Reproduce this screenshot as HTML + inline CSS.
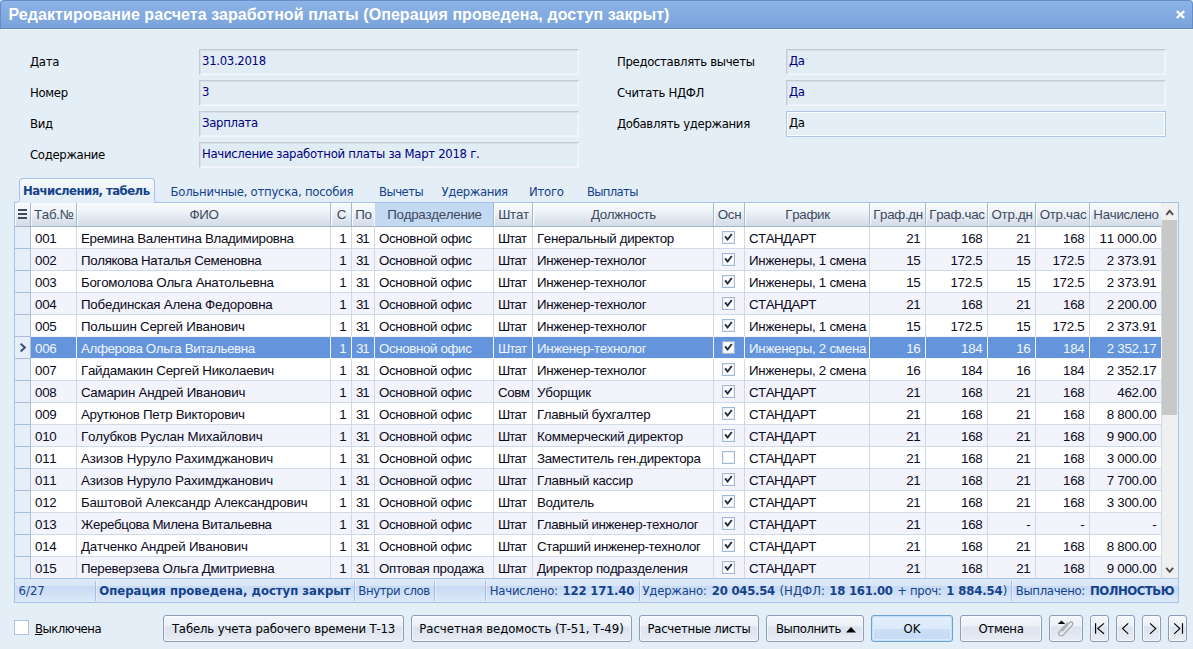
<!DOCTYPE html><html lang="ru"><head><meta charset="utf-8"><title>Редактирование расчета заработной платы</title><style>
html,body{margin:0;padding:0}
body{width:1193px;height:649px;overflow:hidden;background:#e4eef7;position:relative;font-family:"DejaVu Sans Condensed","DejaVu Sans","Liberation Sans",sans-serif;font-size:13px;color:#000;letter-spacing:-0.25px;font-kerning:none;font-variant-ligatures:none}
div,span{box-sizing:border-box}
.abs{position:absolute;white-space:pre}
#title{position:absolute;left:0;top:0;width:1193px;height:29px;background:linear-gradient(#8db3e6,#79a3db);border:1px solid #648ec9;border-bottom-color:#5f8ac6;border-radius:4px 4px 0 0;box-shadow:0 1px 0 #edf3fa}
#title .t{position:absolute;left:7.5px;top:5px;font:bold 16px "Liberation Sans",sans-serif;color:#fff;letter-spacing:0.07px;white-space:pre}
.lbl{position:absolute;height:26px;line-height:25px;white-space:pre;letter-spacing:-0.33px}
.fld{position:absolute;height:26px;width:380px;line-height:22px;padding-left:2px;letter-spacing:-0.31px;white-space:pre;color:#000080;border:1px solid;border-color:#c3cad4 #f1f6fb #f1f6fb #c3cad4;box-shadow:inset 1px 1px 0 #d7dee8,inset -1px -1px 0 #edf3f9;background:#e2ecf5}
.fld.act{border-color:#b2c5e2;box-shadow:inset 0 0 0 1px #fbfdff;color:#000;background:#e4eef7}
.tab{position:absolute;top:182px;height:21px;line-height:20px;color:#15428b;white-space:pre;letter-spacing:-0.4px}
#grid{position:absolute;left:14px;top:202px;width:1165px;height:401px;border:1px solid #a6c2e8;background:#fff}
.hc{position:absolute;top:203px;height:24px;border-right:1px solid #a4b7d0;border-bottom:1px solid #9fb3cc;background:linear-gradient(#f9fbfd,#eef3f7 38%,#dee5ee 72%,#d4dce8);font:13.33px "Liberation Sans",sans-serif;color:#3d4a60;text-align:center;line-height:23px;padding-left:1px;white-space:pre;letter-spacing:-0.3px;overflow:hidden;font-kerning:none;box-shadow:inset 1px 1px 0 #fbfcfe}
.hc.sort{background:#c3d8f1;box-shadow:none}
.hc.presort{border-right-color:#f4f8fd}
.row{position:absolute;left:15px;width:1147px;height:22px;border-bottom:1px solid #cfd9e8;background:#fff}
.row.alt{background:#f3f3fc}
.row.sel{background:#6495dc}
.c{position:absolute;top:0;height:21px;line-height:22px;border-right:1px solid #cfd9e8;font:13.33px "Liberation Sans",sans-serif;line-height:23px;color:#0a0a20;white-space:pre;letter-spacing:-0.26px;overflow:hidden;font-kerning:none}
.row.sel .c{color:#f0f5fd;border-right-color:#f2f6fc}
.row.sel{border-bottom-color:#f2f6fc}
.row.presel{border-bottom-color:#f2f6fc}
.c.ind{background:#e6eef8;height:22px;border-right:1px solid #a9bfdc !important;border-bottom:1px solid #a9bfdc}
.cb{position:absolute;left:8px;top:4px;width:13px;height:13px;border:1px solid #a3b8d2;background:#fff;box-shadow:inset 0 0 0 1px #eef2f8}
#sb{position:absolute;left:15px;top:578px;width:1163px;height:24px;background:linear-gradient(#dfeaf9,#d8e6f8 29%,#c6daf3 31%,#cfe0f5 60%,#dce9f9);color:#15428b;border-top:1px solid #aac6ec}
#sb .abs{top:0;line-height:23px}

.sep{position:absolute;top:2px;width:1px;height:20px;background:#a3bfe3;box-shadow:1px 0 0 rgba(255,255,255,.45)}
.btn{position:absolute;top:615px;height:27px;border:1px solid #8d9cb6;border-radius:3px;box-shadow:inset 0 0 0 1px rgba(255,255,255,.55);background:linear-gradient(#f4f7fb,#ecf0f7 40%,#dde4ef 43%,#e0e7f1 70%,#e9eef6);text-align:center;line-height:26px;white-space:pre;color:#000}
</style></head><body>
<div id="title"><span class="t">Редактирование расчета заработной платы (Операция проведена, доступ закрыт)</span><svg style="position:absolute;left:1174px;top:9px" width="12" height="10" viewBox="0 0 12 10"><path d="M1.8 1.2 L9.2 8 M9.2 1.2 L1.8 8" stroke="#fff" stroke-width="2.3"/></svg></div>
<div class="lbl" style="left:30px;top:49px">Дата</div><div class="fld" style="left:199px;top:49px">31.03.2018</div>
<div class="lbl" style="left:30px;top:80px">Номер</div><div class="fld" style="left:199px;top:80px">3</div>
<div class="lbl" style="left:30px;top:111px">Вид</div><div class="fld" style="left:199px;top:111px">Зарплата</div>
<div class="lbl" style="left:30px;top:142px">Содержание</div><div class="fld" style="left:199px;top:142px">Начисление заработной платы за Март 2018 г.</div>
<div class="lbl" style="left:617px;top:49px">Предоставлять вычеты</div><div class="fld" style="left:786px;top:49px">Да</div>
<div class="lbl" style="left:617px;top:80px">Считать НДФЛ</div><div class="fld" style="left:786px;top:80px">Да</div>
<div class="lbl" style="left:617px;top:111px">Добавлять удержания</div><div class="fld act" style="left:786px;top:111px">Да</div>
<div class="tab" style="left:19px;top:178px;width:136px;height:25px;background:linear-gradient(#f7fafd,#e4eef7 85%);border:1px solid #a6c2e8;border-bottom:none;border-radius:4px 4px 0 0;font-weight:bold;padding-left:3px;line-height:23px;z-index:3;letter-spacing:-0.55px">Начисления, табель</div>
<div class="tab" style="left:170.5px;letter-spacing:-0.26px">Больничные, отпуска, пособия</div>
<div class="tab" style="left:379px;letter-spacing:-0.55px">Вычеты</div>
<div class="tab" style="left:441.5px;letter-spacing:-0.4px">Удержания</div>
<div class="tab" style="left:529px;letter-spacing:-0.25px">Итого</div>
<div class="tab" style="left:587px;letter-spacing:-0.7px">Выплаты</div>
<div id="grid"></div>
<svg style="position:absolute;left:13px;top:196px;z-index:4" width="8" height="8" viewBox="13 196 8 8"><path d="M14 197h7v6h-6v-1h-1z" fill="#e4eef7"/><path d="M19.5 197 V198.5 C19.5 201.5 18 202.5 14.5 202.5 V204" fill="none" stroke="#a6c2e8"/></svg>
<svg style="position:absolute;left:153px;top:196px;z-index:4" width="7" height="7" viewBox="153 196 7 7"><path d="M153 197h6v5h-6z" fill="#e4eef7"/><path d="M154.5 197 V198.5 C154.5 201 155.5 202.5 158 202.5 H160" fill="none" stroke="#a6c2e8"/></svg>
<div class="hc" style="left:15px;width:16px"><svg width="9" height="10" viewBox="0 0 9 10" style="position:absolute;left:3px;top:6px"><path d="M0 1h9M0 5h9M0 9h9" stroke="#3d4a60" stroke-width="2"/></svg></div>
<div class="hc" style="left:31px;width:46px;text-align:left;padding-left:3px">Таб.№</div>
<div class="hc" style="left:77px;width:254px">ФИО</div>
<div class="hc" style="left:331px;width:21px">С</div>
<div class="hc presort" style="left:352px;width:23px">По</div>
<div class="hc sort" style="left:375px;width:119px">Подразделение</div>
<div class="hc" style="left:494px;width:39px">Штат</div>
<div class="hc" style="left:533px;width:181px">Должность</div>
<div class="hc" style="left:714px;width:31px">Осн</div>
<div class="hc" style="left:745px;width:125px">График</div>
<div class="hc" style="left:870px;width:56px">Граф.дн</div>
<div class="hc" style="left:926px;width:62px">Граф.час</div>
<div class="hc" style="left:988px;width:48px">Отр.дн</div>
<div class="hc" style="left:1036px;width:54px">Отр.час</div>
<div class="hc" style="left:1090px;width:72px;border-right-color:#e9edf3">Начислено</div>
<div style="position:absolute;left:1162px;top:203px;width:16px;height:376px;background:#f0f0f0"></div>
<div style="position:absolute;left:1162px;top:220px;width:15px;height:195px;background:#c8c8c8"></div>
<svg style="position:absolute;left:1162px;top:203px" width="16" height="376" viewBox="0 0 16 376"><path d="M4.3 11.8 L7.7 7.8 L11.1 11.8" fill="none" stroke="#4d4d4d" stroke-width="1.9"/><path d="M4.3 364.8 L7.7 368.8 L11.1 364.8" fill="none" stroke="#4d4d4d" stroke-width="1.9"/></svg>
<div class="row" style="top:227px">
<div class="c ind" style="left:0px;width:16px"></div>
<div class="c" style="left:16px;width:46px;padding-left:4px;">001</div>
<div class="c" style="left:62px;width:254px;padding-left:4px;letter-spacing:-0.322px;">Еремина Валентина Владимировна</div>
<div class="c" style="left:316px;width:21px;padding-right:4.5px;text-align:right;">1</div>
<div class="c" style="left:337px;width:23px;padding-left:4px;letter-spacing:-1.2px;">31</div>
<div class="c" style="left:360px;width:119px;padding-left:4px;letter-spacing:-0.37px;">Основной офис</div>
<div class="c" style="left:479px;width:39px;padding-left:4px;letter-spacing:-0.9px;">Штат</div>
<div class="c" style="left:518px;width:181px;padding-left:4px;letter-spacing:-0.355px;">Генеральный директор</div>
<div class="c" style="left:699px;width:31px"><span class="cb"><svg width="11" height="11" viewBox="0 0 11 11" style="position:absolute;left:0;top:0"><path d="M2.1 4.3 L4.6 7.5 L8.8 2" fill="none" stroke="#222c40" stroke-width="1.9"/></svg></span></div>
<div class="c" style="left:730px;width:125px;padding-left:4px;letter-spacing:-0.546px;">СТАНДАРТ</div>
<div class="c" style="left:855px;width:56px;padding-right:4.5px;text-align:right;">21</div>
<div class="c" style="left:911px;width:62px;padding-right:4.5px;text-align:right;">168</div>
<div class="c" style="left:973px;width:48px;padding-right:4.5px;text-align:right;">21</div>
<div class="c" style="left:1021px;width:54px;padding-right:4.5px;text-align:right;">168</div>
<div class="c" style="left:1075px;width:72px;padding-right:4.5px;text-align:right;">11 000.00</div>
</div>
<div class="row alt" style="top:249px">
<div class="c ind" style="left:0px;width:16px"></div>
<div class="c" style="left:16px;width:46px;padding-left:4px;">002</div>
<div class="c" style="left:62px;width:254px;padding-left:4px;letter-spacing:-0.372px;">Полякова Наталья Семеновна</div>
<div class="c" style="left:316px;width:21px;padding-right:4.5px;text-align:right;">1</div>
<div class="c" style="left:337px;width:23px;padding-left:4px;letter-spacing:-1.2px;">31</div>
<div class="c" style="left:360px;width:119px;padding-left:4px;letter-spacing:-0.37px;">Основной офис</div>
<div class="c" style="left:479px;width:39px;padding-left:4px;letter-spacing:-0.9px;">Штат</div>
<div class="c" style="left:518px;width:181px;padding-left:4px;letter-spacing:-0.36px;">Инженер-технолог</div>
<div class="c" style="left:699px;width:31px"><span class="cb"><svg width="11" height="11" viewBox="0 0 11 11" style="position:absolute;left:0;top:0"><path d="M2.1 4.3 L4.6 7.5 L8.8 2" fill="none" stroke="#222c40" stroke-width="1.9"/></svg></span></div>
<div class="c" style="left:730px;width:125px;padding-left:4px;">Инженеры, 1 смена</div>
<div class="c" style="left:855px;width:56px;padding-right:4.5px;text-align:right;">15</div>
<div class="c" style="left:911px;width:62px;padding-right:4.5px;text-align:right;">172.5</div>
<div class="c" style="left:973px;width:48px;padding-right:4.5px;text-align:right;">15</div>
<div class="c" style="left:1021px;width:54px;padding-right:4.5px;text-align:right;">172.5</div>
<div class="c" style="left:1075px;width:72px;padding-right:4.5px;text-align:right;">2 373.91</div>
</div>
<div class="row" style="top:271px">
<div class="c ind" style="left:0px;width:16px"></div>
<div class="c" style="left:16px;width:46px;padding-left:4px;">003</div>
<div class="c" style="left:62px;width:254px;padding-left:4px;letter-spacing:-0.282px;">Богомолова Ольга Анатольевна</div>
<div class="c" style="left:316px;width:21px;padding-right:4.5px;text-align:right;">1</div>
<div class="c" style="left:337px;width:23px;padding-left:4px;letter-spacing:-1.2px;">31</div>
<div class="c" style="left:360px;width:119px;padding-left:4px;letter-spacing:-0.37px;">Основной офис</div>
<div class="c" style="left:479px;width:39px;padding-left:4px;letter-spacing:-0.9px;">Штат</div>
<div class="c" style="left:518px;width:181px;padding-left:4px;letter-spacing:-0.36px;">Инженер-технолог</div>
<div class="c" style="left:699px;width:31px"><span class="cb"><svg width="11" height="11" viewBox="0 0 11 11" style="position:absolute;left:0;top:0"><path d="M2.1 4.3 L4.6 7.5 L8.8 2" fill="none" stroke="#222c40" stroke-width="1.9"/></svg></span></div>
<div class="c" style="left:730px;width:125px;padding-left:4px;">Инженеры, 1 смена</div>
<div class="c" style="left:855px;width:56px;padding-right:4.5px;text-align:right;">15</div>
<div class="c" style="left:911px;width:62px;padding-right:4.5px;text-align:right;">172.5</div>
<div class="c" style="left:973px;width:48px;padding-right:4.5px;text-align:right;">15</div>
<div class="c" style="left:1021px;width:54px;padding-right:4.5px;text-align:right;">172.5</div>
<div class="c" style="left:1075px;width:72px;padding-right:4.5px;text-align:right;">2 373.91</div>
</div>
<div class="row alt" style="top:293px">
<div class="c ind" style="left:0px;width:16px"></div>
<div class="c" style="left:16px;width:46px;padding-left:4px;">004</div>
<div class="c" style="left:62px;width:254px;padding-left:4px;letter-spacing:-0.218px;">Побединская Алена Федоровна</div>
<div class="c" style="left:316px;width:21px;padding-right:4.5px;text-align:right;">1</div>
<div class="c" style="left:337px;width:23px;padding-left:4px;letter-spacing:-1.2px;">31</div>
<div class="c" style="left:360px;width:119px;padding-left:4px;letter-spacing:-0.37px;">Основной офис</div>
<div class="c" style="left:479px;width:39px;padding-left:4px;letter-spacing:-0.9px;">Штат</div>
<div class="c" style="left:518px;width:181px;padding-left:4px;letter-spacing:-0.36px;">Инженер-технолог</div>
<div class="c" style="left:699px;width:31px"><span class="cb"><svg width="11" height="11" viewBox="0 0 11 11" style="position:absolute;left:0;top:0"><path d="M2.1 4.3 L4.6 7.5 L8.8 2" fill="none" stroke="#222c40" stroke-width="1.9"/></svg></span></div>
<div class="c" style="left:730px;width:125px;padding-left:4px;letter-spacing:-0.546px;">СТАНДАРТ</div>
<div class="c" style="left:855px;width:56px;padding-right:4.5px;text-align:right;">21</div>
<div class="c" style="left:911px;width:62px;padding-right:4.5px;text-align:right;">168</div>
<div class="c" style="left:973px;width:48px;padding-right:4.5px;text-align:right;">21</div>
<div class="c" style="left:1021px;width:54px;padding-right:4.5px;text-align:right;">168</div>
<div class="c" style="left:1075px;width:72px;padding-right:4.5px;text-align:right;">2 200.00</div>
</div>
<div class="row presel" style="top:315px">
<div class="c ind" style="left:0px;width:16px"></div>
<div class="c" style="left:16px;width:46px;padding-left:4px;">005</div>
<div class="c" style="left:62px;width:254px;padding-left:4px;letter-spacing:-0.233px;">Польшин Сергей Иванович</div>
<div class="c" style="left:316px;width:21px;padding-right:4.5px;text-align:right;">1</div>
<div class="c" style="left:337px;width:23px;padding-left:4px;letter-spacing:-1.2px;">31</div>
<div class="c" style="left:360px;width:119px;padding-left:4px;letter-spacing:-0.37px;">Основной офис</div>
<div class="c" style="left:479px;width:39px;padding-left:4px;letter-spacing:-0.9px;">Штат</div>
<div class="c" style="left:518px;width:181px;padding-left:4px;letter-spacing:-0.36px;">Инженер-технолог</div>
<div class="c" style="left:699px;width:31px"><span class="cb"><svg width="11" height="11" viewBox="0 0 11 11" style="position:absolute;left:0;top:0"><path d="M2.1 4.3 L4.6 7.5 L8.8 2" fill="none" stroke="#222c40" stroke-width="1.9"/></svg></span></div>
<div class="c" style="left:730px;width:125px;padding-left:4px;">Инженеры, 1 смена</div>
<div class="c" style="left:855px;width:56px;padding-right:4.5px;text-align:right;">15</div>
<div class="c" style="left:911px;width:62px;padding-right:4.5px;text-align:right;">172.5</div>
<div class="c" style="left:973px;width:48px;padding-right:4.5px;text-align:right;">15</div>
<div class="c" style="left:1021px;width:54px;padding-right:4.5px;text-align:right;">172.5</div>
<div class="c" style="left:1075px;width:72px;padding-right:4.5px;text-align:right;">2 373.91</div>
</div>
<div class="row alt sel" style="top:337px">
<div class="c ind" style="left:0px;width:16px"><svg width="10" height="12" viewBox="0 0 10 12" style="position:absolute;left:3px;top:5px"><path d="M2.6 1.8 L6.9 5.6 L2.6 9.4" fill="none" stroke="#3f5078" stroke-width="2"/></svg></div>
<div class="c" style="left:16px;width:46px;padding-left:4px;">006</div>
<div class="c" style="left:62px;width:254px;padding-left:4px;letter-spacing:-0.364px;">Алферова Ольга Витальевна</div>
<div class="c" style="left:316px;width:21px;padding-right:4.5px;text-align:right;">1</div>
<div class="c" style="left:337px;width:23px;padding-left:4px;letter-spacing:-1.2px;">31</div>
<div class="c" style="left:360px;width:119px;padding-left:4px;letter-spacing:-0.37px;">Основной офис</div>
<div class="c" style="left:479px;width:39px;padding-left:4px;letter-spacing:-0.9px;">Штат</div>
<div class="c" style="left:518px;width:181px;padding-left:4px;letter-spacing:-0.36px;">Инженер-технолог</div>
<div class="c" style="left:699px;width:31px"><span class="cb"><svg width="11" height="11" viewBox="0 0 11 11" style="position:absolute;left:0;top:0"><path d="M2.1 4.3 L4.6 7.5 L8.8 2" fill="none" stroke="#222c40" stroke-width="1.9"/></svg></span></div>
<div class="c" style="left:730px;width:125px;padding-left:4px;">Инженеры, 2 смена</div>
<div class="c" style="left:855px;width:56px;padding-right:4.5px;text-align:right;">16</div>
<div class="c" style="left:911px;width:62px;padding-right:4.5px;text-align:right;">184</div>
<div class="c" style="left:973px;width:48px;padding-right:4.5px;text-align:right;">16</div>
<div class="c" style="left:1021px;width:54px;padding-right:4.5px;text-align:right;">184</div>
<div class="c" style="left:1075px;width:72px;padding-right:4.5px;text-align:right;">2 352.17</div>
</div>
<div class="row" style="top:359px">
<div class="c ind" style="left:0px;width:16px"></div>
<div class="c" style="left:16px;width:46px;padding-left:4px;">007</div>
<div class="c" style="left:62px;width:254px;padding-left:4px;letter-spacing:-0.264px;">Гайдамакин Сергей Николаевич</div>
<div class="c" style="left:316px;width:21px;padding-right:4.5px;text-align:right;">1</div>
<div class="c" style="left:337px;width:23px;padding-left:4px;letter-spacing:-1.2px;">31</div>
<div class="c" style="left:360px;width:119px;padding-left:4px;letter-spacing:-0.37px;">Основной офис</div>
<div class="c" style="left:479px;width:39px;padding-left:4px;letter-spacing:-0.9px;">Штат</div>
<div class="c" style="left:518px;width:181px;padding-left:4px;letter-spacing:-0.36px;">Инженер-технолог</div>
<div class="c" style="left:699px;width:31px"><span class="cb"><svg width="11" height="11" viewBox="0 0 11 11" style="position:absolute;left:0;top:0"><path d="M2.1 4.3 L4.6 7.5 L8.8 2" fill="none" stroke="#222c40" stroke-width="1.9"/></svg></span></div>
<div class="c" style="left:730px;width:125px;padding-left:4px;">Инженеры, 2 смена</div>
<div class="c" style="left:855px;width:56px;padding-right:4.5px;text-align:right;">16</div>
<div class="c" style="left:911px;width:62px;padding-right:4.5px;text-align:right;">184</div>
<div class="c" style="left:973px;width:48px;padding-right:4.5px;text-align:right;">16</div>
<div class="c" style="left:1021px;width:54px;padding-right:4.5px;text-align:right;">184</div>
<div class="c" style="left:1075px;width:72px;padding-right:4.5px;text-align:right;">2 352.17</div>
</div>
<div class="row alt" style="top:381px">
<div class="c ind" style="left:0px;width:16px"></div>
<div class="c" style="left:16px;width:46px;padding-left:4px;">008</div>
<div class="c" style="left:62px;width:254px;padding-left:4px;letter-spacing:-0.251px;">Самарин Андрей Иванович</div>
<div class="c" style="left:316px;width:21px;padding-right:4.5px;text-align:right;">1</div>
<div class="c" style="left:337px;width:23px;padding-left:4px;letter-spacing:-1.2px;">31</div>
<div class="c" style="left:360px;width:119px;padding-left:4px;letter-spacing:-0.37px;">Основной офис</div>
<div class="c" style="left:479px;width:39px;padding-left:4px;letter-spacing:-0.45px;">Совм</div>
<div class="c" style="left:518px;width:181px;padding-left:4px;letter-spacing:-0.177px;">Уборщик</div>
<div class="c" style="left:699px;width:31px"><span class="cb"><svg width="11" height="11" viewBox="0 0 11 11" style="position:absolute;left:0;top:0"><path d="M2.1 4.3 L4.6 7.5 L8.8 2" fill="none" stroke="#222c40" stroke-width="1.9"/></svg></span></div>
<div class="c" style="left:730px;width:125px;padding-left:4px;letter-spacing:-0.546px;">СТАНДАРТ</div>
<div class="c" style="left:855px;width:56px;padding-right:4.5px;text-align:right;">21</div>
<div class="c" style="left:911px;width:62px;padding-right:4.5px;text-align:right;">168</div>
<div class="c" style="left:973px;width:48px;padding-right:4.5px;text-align:right;">21</div>
<div class="c" style="left:1021px;width:54px;padding-right:4.5px;text-align:right;">168</div>
<div class="c" style="left:1075px;width:72px;padding-right:4.5px;text-align:right;">462.00</div>
</div>
<div class="row" style="top:403px">
<div class="c ind" style="left:0px;width:16px"></div>
<div class="c" style="left:16px;width:46px;padding-left:4px;">009</div>
<div class="c" style="left:62px;width:254px;padding-left:4px;letter-spacing:-0.295px;">Арутюнов Петр Викторович</div>
<div class="c" style="left:316px;width:21px;padding-right:4.5px;text-align:right;">1</div>
<div class="c" style="left:337px;width:23px;padding-left:4px;letter-spacing:-1.2px;">31</div>
<div class="c" style="left:360px;width:119px;padding-left:4px;letter-spacing:-0.37px;">Основной офис</div>
<div class="c" style="left:479px;width:39px;padding-left:4px;letter-spacing:-0.9px;">Штат</div>
<div class="c" style="left:518px;width:181px;padding-left:4px;letter-spacing:-0.372px;">Главный бухгалтер</div>
<div class="c" style="left:699px;width:31px"><span class="cb"><svg width="11" height="11" viewBox="0 0 11 11" style="position:absolute;left:0;top:0"><path d="M2.1 4.3 L4.6 7.5 L8.8 2" fill="none" stroke="#222c40" stroke-width="1.9"/></svg></span></div>
<div class="c" style="left:730px;width:125px;padding-left:4px;letter-spacing:-0.546px;">СТАНДАРТ</div>
<div class="c" style="left:855px;width:56px;padding-right:4.5px;text-align:right;">21</div>
<div class="c" style="left:911px;width:62px;padding-right:4.5px;text-align:right;">168</div>
<div class="c" style="left:973px;width:48px;padding-right:4.5px;text-align:right;">21</div>
<div class="c" style="left:1021px;width:54px;padding-right:4.5px;text-align:right;">168</div>
<div class="c" style="left:1075px;width:72px;padding-right:4.5px;text-align:right;">8 800.00</div>
</div>
<div class="row alt" style="top:425px">
<div class="c ind" style="left:0px;width:16px"></div>
<div class="c" style="left:16px;width:46px;padding-left:4px;">010</div>
<div class="c" style="left:62px;width:254px;padding-left:4px;letter-spacing:-0.172px;">Голубков Руслан Михайлович</div>
<div class="c" style="left:316px;width:21px;padding-right:4.5px;text-align:right;">1</div>
<div class="c" style="left:337px;width:23px;padding-left:4px;letter-spacing:-1.2px;">31</div>
<div class="c" style="left:360px;width:119px;padding-left:4px;letter-spacing:-0.37px;">Основной офис</div>
<div class="c" style="left:479px;width:39px;padding-left:4px;letter-spacing:-0.9px;">Штат</div>
<div class="c" style="left:518px;width:181px;padding-left:4px;letter-spacing:-0.225px;">Коммерческий директор</div>
<div class="c" style="left:699px;width:31px"><span class="cb"><svg width="11" height="11" viewBox="0 0 11 11" style="position:absolute;left:0;top:0"><path d="M2.1 4.3 L4.6 7.5 L8.8 2" fill="none" stroke="#222c40" stroke-width="1.9"/></svg></span></div>
<div class="c" style="left:730px;width:125px;padding-left:4px;letter-spacing:-0.546px;">СТАНДАРТ</div>
<div class="c" style="left:855px;width:56px;padding-right:4.5px;text-align:right;">21</div>
<div class="c" style="left:911px;width:62px;padding-right:4.5px;text-align:right;">168</div>
<div class="c" style="left:973px;width:48px;padding-right:4.5px;text-align:right;">21</div>
<div class="c" style="left:1021px;width:54px;padding-right:4.5px;text-align:right;">168</div>
<div class="c" style="left:1075px;width:72px;padding-right:4.5px;text-align:right;">9 900.00</div>
</div>
<div class="row" style="top:447px">
<div class="c ind" style="left:0px;width:16px"></div>
<div class="c" style="left:16px;width:46px;padding-left:4px;">011</div>
<div class="c" style="left:62px;width:254px;padding-left:4px;letter-spacing:-0.141px;">Азизов Нуруло Рахимджанович</div>
<div class="c" style="left:316px;width:21px;padding-right:4.5px;text-align:right;">1</div>
<div class="c" style="left:337px;width:23px;padding-left:4px;letter-spacing:-1.2px;">31</div>
<div class="c" style="left:360px;width:119px;padding-left:4px;letter-spacing:-0.37px;">Основной офис</div>
<div class="c" style="left:479px;width:39px;padding-left:4px;letter-spacing:-0.9px;">Штат</div>
<div class="c" style="left:518px;width:181px;padding-left:4px;letter-spacing:-0.331px;">Заместитель ген.директора</div>
<div class="c" style="left:699px;width:31px"><span class="cb"></span></div>
<div class="c" style="left:730px;width:125px;padding-left:4px;letter-spacing:-0.546px;">СТАНДАРТ</div>
<div class="c" style="left:855px;width:56px;padding-right:4.5px;text-align:right;">21</div>
<div class="c" style="left:911px;width:62px;padding-right:4.5px;text-align:right;">168</div>
<div class="c" style="left:973px;width:48px;padding-right:4.5px;text-align:right;">21</div>
<div class="c" style="left:1021px;width:54px;padding-right:4.5px;text-align:right;">168</div>
<div class="c" style="left:1075px;width:72px;padding-right:4.5px;text-align:right;">3 000.00</div>
</div>
<div class="row alt" style="top:469px">
<div class="c ind" style="left:0px;width:16px"></div>
<div class="c" style="left:16px;width:46px;padding-left:4px;">011</div>
<div class="c" style="left:62px;width:254px;padding-left:4px;letter-spacing:-0.141px;">Азизов Нуруло Рахимджанович</div>
<div class="c" style="left:316px;width:21px;padding-right:4.5px;text-align:right;">1</div>
<div class="c" style="left:337px;width:23px;padding-left:4px;letter-spacing:-1.2px;">31</div>
<div class="c" style="left:360px;width:119px;padding-left:4px;letter-spacing:-0.37px;">Основной офис</div>
<div class="c" style="left:479px;width:39px;padding-left:4px;letter-spacing:-0.9px;">Штат</div>
<div class="c" style="left:518px;width:181px;padding-left:4px;letter-spacing:-0.222px;">Главный кассир</div>
<div class="c" style="left:699px;width:31px"><span class="cb"><svg width="11" height="11" viewBox="0 0 11 11" style="position:absolute;left:0;top:0"><path d="M2.1 4.3 L4.6 7.5 L8.8 2" fill="none" stroke="#222c40" stroke-width="1.9"/></svg></span></div>
<div class="c" style="left:730px;width:125px;padding-left:4px;letter-spacing:-0.546px;">СТАНДАРТ</div>
<div class="c" style="left:855px;width:56px;padding-right:4.5px;text-align:right;">21</div>
<div class="c" style="left:911px;width:62px;padding-right:4.5px;text-align:right;">168</div>
<div class="c" style="left:973px;width:48px;padding-right:4.5px;text-align:right;">21</div>
<div class="c" style="left:1021px;width:54px;padding-right:4.5px;text-align:right;">168</div>
<div class="c" style="left:1075px;width:72px;padding-right:4.5px;text-align:right;">7 700.00</div>
</div>
<div class="row" style="top:491px">
<div class="c ind" style="left:0px;width:16px"></div>
<div class="c" style="left:16px;width:46px;padding-left:4px;">012</div>
<div class="c" style="left:62px;width:254px;padding-left:4px;letter-spacing:-0.163px;">Баштовой Александр Александрович</div>
<div class="c" style="left:316px;width:21px;padding-right:4.5px;text-align:right;">1</div>
<div class="c" style="left:337px;width:23px;padding-left:4px;letter-spacing:-1.2px;">31</div>
<div class="c" style="left:360px;width:119px;padding-left:4px;letter-spacing:-0.37px;">Основной офис</div>
<div class="c" style="left:479px;width:39px;padding-left:4px;letter-spacing:-0.9px;">Штат</div>
<div class="c" style="left:518px;width:181px;padding-left:4px;letter-spacing:-0.374px;">Водитель</div>
<div class="c" style="left:699px;width:31px"><span class="cb"><svg width="11" height="11" viewBox="0 0 11 11" style="position:absolute;left:0;top:0"><path d="M2.1 4.3 L4.6 7.5 L8.8 2" fill="none" stroke="#222c40" stroke-width="1.9"/></svg></span></div>
<div class="c" style="left:730px;width:125px;padding-left:4px;letter-spacing:-0.546px;">СТАНДАРТ</div>
<div class="c" style="left:855px;width:56px;padding-right:4.5px;text-align:right;">21</div>
<div class="c" style="left:911px;width:62px;padding-right:4.5px;text-align:right;">168</div>
<div class="c" style="left:973px;width:48px;padding-right:4.5px;text-align:right;">21</div>
<div class="c" style="left:1021px;width:54px;padding-right:4.5px;text-align:right;">168</div>
<div class="c" style="left:1075px;width:72px;padding-right:4.5px;text-align:right;">3 300.00</div>
</div>
<div class="row alt" style="top:513px">
<div class="c ind" style="left:0px;width:16px"></div>
<div class="c" style="left:16px;width:46px;padding-left:4px;">013</div>
<div class="c" style="left:62px;width:254px;padding-left:4px;letter-spacing:-0.402px;">Жеребцова Милена Витальевна</div>
<div class="c" style="left:316px;width:21px;padding-right:4.5px;text-align:right;">1</div>
<div class="c" style="left:337px;width:23px;padding-left:4px;letter-spacing:-1.2px;">31</div>
<div class="c" style="left:360px;width:119px;padding-left:4px;letter-spacing:-0.37px;">Основной офис</div>
<div class="c" style="left:479px;width:39px;padding-left:4px;letter-spacing:-0.9px;">Штат</div>
<div class="c" style="left:518px;width:181px;padding-left:4px;letter-spacing:-0.382px;">Главный инженер-технолог</div>
<div class="c" style="left:699px;width:31px"><span class="cb"><svg width="11" height="11" viewBox="0 0 11 11" style="position:absolute;left:0;top:0"><path d="M2.1 4.3 L4.6 7.5 L8.8 2" fill="none" stroke="#222c40" stroke-width="1.9"/></svg></span></div>
<div class="c" style="left:730px;width:125px;padding-left:4px;letter-spacing:-0.546px;">СТАНДАРТ</div>
<div class="c" style="left:855px;width:56px;padding-right:4.5px;text-align:right;">21</div>
<div class="c" style="left:911px;width:62px;padding-right:4.5px;text-align:right;">168</div>
<div class="c" style="left:973px;width:48px;padding-right:4.5px;text-align:right;">-</div>
<div class="c" style="left:1021px;width:54px;padding-right:4.5px;text-align:right;">-</div>
<div class="c" style="left:1075px;width:72px;padding-right:4.5px;text-align:right;">-</div>
</div>
<div class="row" style="top:535px">
<div class="c ind" style="left:0px;width:16px"></div>
<div class="c" style="left:16px;width:46px;padding-left:4px;">014</div>
<div class="c" style="left:62px;width:254px;padding-left:4px;letter-spacing:-0.203px;">Датченко Андрей Иванович</div>
<div class="c" style="left:316px;width:21px;padding-right:4.5px;text-align:right;">1</div>
<div class="c" style="left:337px;width:23px;padding-left:4px;letter-spacing:-1.2px;">31</div>
<div class="c" style="left:360px;width:119px;padding-left:4px;letter-spacing:-0.37px;">Основной офис</div>
<div class="c" style="left:479px;width:39px;padding-left:4px;letter-spacing:-0.9px;">Штат</div>
<div class="c" style="left:518px;width:181px;padding-left:4px;letter-spacing:-0.377px;">Старший инженер-технолог</div>
<div class="c" style="left:699px;width:31px"><span class="cb"><svg width="11" height="11" viewBox="0 0 11 11" style="position:absolute;left:0;top:0"><path d="M2.1 4.3 L4.6 7.5 L8.8 2" fill="none" stroke="#222c40" stroke-width="1.9"/></svg></span></div>
<div class="c" style="left:730px;width:125px;padding-left:4px;letter-spacing:-0.546px;">СТАНДАРТ</div>
<div class="c" style="left:855px;width:56px;padding-right:4.5px;text-align:right;">21</div>
<div class="c" style="left:911px;width:62px;padding-right:4.5px;text-align:right;">168</div>
<div class="c" style="left:973px;width:48px;padding-right:4.5px;text-align:right;">21</div>
<div class="c" style="left:1021px;width:54px;padding-right:4.5px;text-align:right;">168</div>
<div class="c" style="left:1075px;width:72px;padding-right:4.5px;text-align:right;">8 800.00</div>
</div>
<div class="row alt" style="top:557px">
<div class="c ind" style="left:0px;width:16px"></div>
<div class="c" style="left:16px;width:46px;padding-left:4px;">015</div>
<div class="c" style="left:62px;width:254px;padding-left:4px;letter-spacing:-0.323px;">Переверзева Ольга Дмитриевна</div>
<div class="c" style="left:316px;width:21px;padding-right:4.5px;text-align:right;">1</div>
<div class="c" style="left:337px;width:23px;padding-left:4px;letter-spacing:-1.2px;">31</div>
<div class="c" style="left:360px;width:119px;padding-left:4px;letter-spacing:-0.35px;">Оптовая продажа</div>
<div class="c" style="left:479px;width:39px;padding-left:4px;letter-spacing:-0.9px;">Штат</div>
<div class="c" style="left:518px;width:181px;padding-left:4px;letter-spacing:-0.317px;">Директор подразделения</div>
<div class="c" style="left:699px;width:31px"><span class="cb"><svg width="11" height="11" viewBox="0 0 11 11" style="position:absolute;left:0;top:0"><path d="M2.1 4.3 L4.6 7.5 L8.8 2" fill="none" stroke="#222c40" stroke-width="1.9"/></svg></span></div>
<div class="c" style="left:730px;width:125px;padding-left:4px;letter-spacing:-0.546px;">СТАНДАРТ</div>
<div class="c" style="left:855px;width:56px;padding-right:4.5px;text-align:right;">21</div>
<div class="c" style="left:911px;width:62px;padding-right:4.5px;text-align:right;">168</div>
<div class="c" style="left:973px;width:48px;padding-right:4.5px;text-align:right;">21</div>
<div class="c" style="left:1021px;width:54px;padding-right:4.5px;text-align:right;">168</div>
<div class="c" style="left:1075px;width:72px;padding-right:4.5px;text-align:right;">9 000.00</div>
</div>
<div id="sb">
<span class="abs" style="left:3.55px;letter-spacing:-0.022px">6/27</span>
<b class="abs" style="left:84.35px;letter-spacing:-0.012px">Операция проведена, доступ закрыт</b>
<span class="abs" style="left:343.35px;letter-spacing:-0.421px">Внутри слов</span>
<span class="abs" style="left:474.75px;letter-spacing:-0.225px">Начислено:</span>
<b class="abs" style="left:547.55px;letter-spacing:-0.203px">122 171.40</b>
<span class="abs" style="left:627.45px;letter-spacing:-0.237px">Удержано:</span>
<b class="abs" style="left:696.85px;letter-spacing:-0.261px">20 045.54</b>
<span class="abs" style="left:764.45px;letter-spacing:0.057px">(НДФЛ:</span>
<b class="abs" style="left:814.25px;letter-spacing:-0.223px">18 161.00</b>
<span class="abs" style="left:882.15px;letter-spacing:-0.335px">+ проч:</span>
<b class="abs" style="left:931.25px;letter-spacing:-0.135px">1 884.54</b>
<span class="abs" style="left:987.65px;letter-spacing:0px">)</span>
<span class="abs" style="left:1000.75px;letter-spacing:-0.325px">Выплачено:</span>
<b class="abs" style="left:1075.05px;letter-spacing:-0.497px">ПОЛНОСТЬЮ</b>
<span class="sep" style="left:80px"></span>
<span class="sep" style="left:339px"></span>
<span class="sep" style="left:419px"></span>
<span class="sep" style="left:470px"></span>
<span class="sep" style="left:624px"></span>
<span class="sep" style="left:996px"></span>
</div>
<div style="position:absolute;left:14px;top:620px;width:15px;height:15px;border:1px solid #b4c4d8;background:#fff"></div>
<div class="abs" style="left:35px;top:620px;line-height:18px;letter-spacing:-0.5px"><u>В</u>ыключена</div>
<div class="btn" style="left:163px;width:241px;letter-spacing:-0.15px">Табель учета рабочего времени Т-13</div>
<div class="btn" style="left:411px;width:221px;letter-spacing:-0.03px">Расчетная ведомость (Т-51, Т-49)</div>
<div class="btn" style="left:639px;width:120px;letter-spacing:-0.25px">Расчетные листы</div>
<div class="btn" style="left:766px;width:98px;letter-spacing:-0.4px;text-align:left;padding-left:9px">Выполнить<svg width="10" height="6" viewBox="0 0 10 6" style="position:absolute;left:79px;top:11px"><path d="M0 5.5 L5 0 L10 5.5 Z" fill="#000"/></svg></div>
<div class="btn" style="left:871px;width:82px;letter-spacing:0px;border-color:#6f9ed8;box-shadow:inset 0 0 0 1px #c4e3fb,inset 0 0 0 2px #d8ebfb;background:linear-gradient(#e6f0fb,#dbe9f9 50%,#cbdff6 52%,#c6dcf5)">OK</div>
<div class="btn" style="left:960px;width:82px;letter-spacing:-0.3px">Отмена</div>
<div class="btn" style="left:1049px;width:34px"><svg width="34" height="27" viewBox="0 0 34 27" style="position:absolute;left:-1px;top:-1px"><path d="M8.8 8.9 L12.5 5.4 L16.2 8.9 Z" fill="#000"/><g transform="translate(10.6,20.3) rotate(-48)"><path d="M14.5 -2.6 H2.6 a2.6 2.6 0 0 0 0 5.2 H16.4 a1.8 1.8 0 0 0 0 -3.6 H5.2" fill="none" stroke="#a3a3a3" stroke-width="1.2" stroke-linecap="round"/></g></svg></div>
<div class="btn" style="left:1090px;width:19px"><svg width="19" height="27" viewBox="0 0 19 27" style="position:absolute;left:-1px;top:-1px"><path d="M5.6 8.3v10.5 M14 8.4 L7.8 13.6 L14 18.8" fill="none" stroke="#000" stroke-width="1.15"/></svg></div>
<div class="btn" style="left:1116px;width:19px"><svg width="19" height="27" viewBox="0 0 19 27" style="position:absolute;left:-1px;top:-1px"><path d="M12.2 8.4 L6.6 13.6 L12.2 18.8" fill="none" stroke="#000" stroke-width="1.15"/></svg></div>
<div class="btn" style="left:1142px;width:19px"><svg width="19" height="27" viewBox="0 0 19 27" style="position:absolute;left:-1px;top:-1px"><path d="M8 8.4 L13.7 13.6 L8 18.8" fill="none" stroke="#000" stroke-width="1.15"/></svg></div>
<div class="btn" style="left:1168px;width:19px"><svg width="19" height="27" viewBox="0 0 19 27" style="position:absolute;left:-1px;top:-1px"><path d="M14.5 8.3v10.5 M6.2 8.4 L11.8 13.6 L6.2 18.8" fill="none" stroke="#000" stroke-width="1.15"/></svg></div>
</body></html>
